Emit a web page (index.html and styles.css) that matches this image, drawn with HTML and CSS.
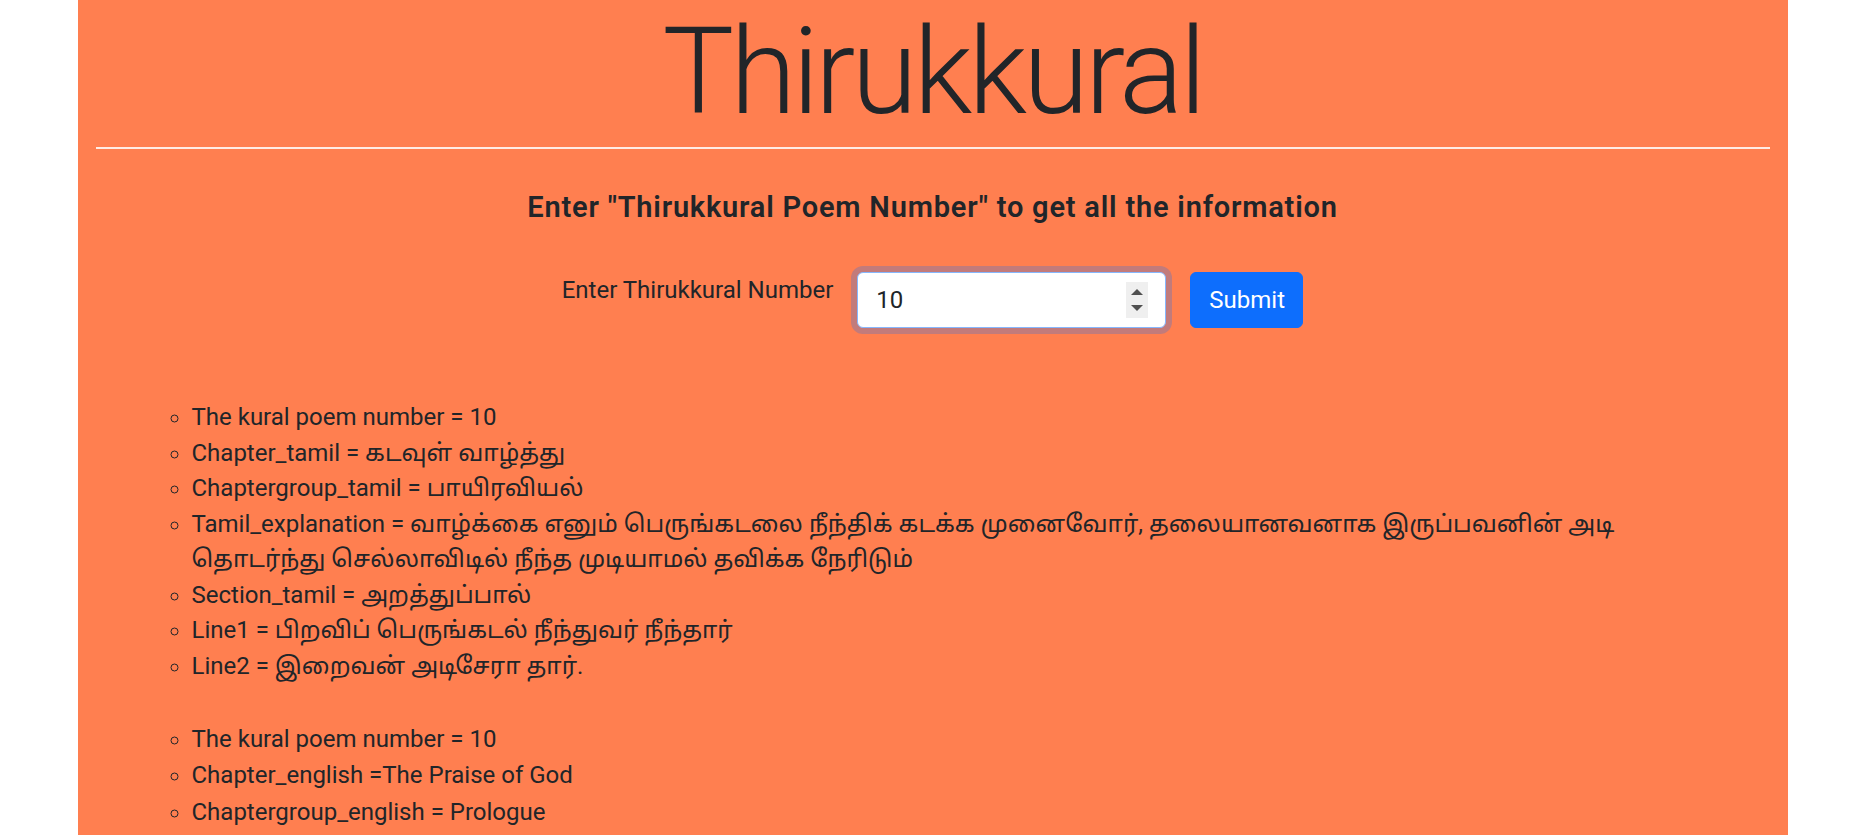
FILE: index.html
```html
<!DOCTYPE html>
<html lang="en">
<head>
<meta charset="utf-8">
<title>Thirukkural</title>
<link rel="stylesheet" href="styles.css">
</head>
<body>
<div class="container">
  <h1 class="title">Thirukkural</h1>
  <hr class="rule">
  <h2 class="prompt">Enter "Thirukkural Poem Number" to get all the information</h2>
  <form class="kural-form">
    <label class="form-label" for="num">Enter Thirukkural Number</label>
    <div class="input-wrap">
      <input id="num" class="num-input" type="text" value="10">
      <span class="spinner"><span class="arrow up"></span><span class="arrow down"></span></span>
    </div>
    <button class="btn-submit" type="button">Submit</button>
  </form>

  <ul class="outer">
    <li class="outer-item">
      <ul class="inner">
        <li>The kural poem number = 10</li>
        <li>Chapter_tamil = கடவுள் வாழ்த்து</li>
        <li>Chaptergroup_tamil = பாயிரவியல்</li>
        <li>Tamil_explanation = வாழ்க்கை எனும் பெருங்கடலை நீந்திக் கடக்க முனைவோர், தலையானவனாக இருப்பவனின் அடி<br>தொடர்ந்து செல்லாவிடில் நீந்த முடியாமல் தவிக்க நேரிடும்</li>
        <li>Section_tamil = அறத்துப்பால்</li>
        <li>Line1 = பிறவிப் பெருங்கடல் நீந்துவர் நீந்தார்</li>
        <li>Line2 = இறைவன் அடிசேரா தார்.</li>
      </ul>
    </li>
  </ul>

  <ul class="outer second">
    <li class="outer-item">
      <ul class="inner">
        <li>The kural poem number = 10</li>
        <li>Chapter_english =The Praise of God</li>
        <li>Chaptergroup_english = Prologue</li>
      </ul>
    </li>
  </ul>
</div>
</body>
</html>
```

FILE: styles.css
```css
html, body {
  margin: 0;
  padding: 0;
  background: #ffffff;
}

body {
  font-family: Roboto, "Noto Sans Tamil", "Lohit Tamil", "Noto Sans", sans-serif;
  color: #212529;
  font-size: 24px;
  line-height: 36px;
}

.container {
  width: 1710px;
  box-sizing: border-box;
  margin: 0 auto;
  padding: 0 18px 40px;
  background: #ff7f50;
  min-height: 100vh;
}

.title {
  margin: 0;
  font-size: 120px;
  line-height: 144px;
  font-weight: 300;
  letter-spacing: -4px;
  text-align: center;
}

.rule {
  margin: 3px 0 0;
  border: 0;
  border-top: 2px solid rgba(255, 255, 255, 0.85);
  height: 0;
}

.prompt {
  margin: 42px 0 0;
  font-size: 29px;
  line-height: 33px;
  font-weight: 600;
  letter-spacing: 0.8px;
  text-align: center;
}

.kural-form {
  margin: 48px 0 0;
  display: flex;
  justify-content: center;
  align-items: flex-start;
  gap: 24px;
}

.form-label {
  font-size: 24px;
  line-height: 36px;
}

.input-wrap {
  position: relative;
  width: 309px;
  height: 56px;
}

.num-input {
  box-sizing: border-box;
  width: 100%;
  height: 56px;
  margin: 0;
  padding: 9px 18px;
  font-family: inherit;
  font-size: 24px;
  line-height: 36px;
  color: #212529;
  background: #ffffff;
  border: 1.5px solid #86b7fe;
  border-radius: 6px;
  box-shadow: 0 0 0 6px rgba(13, 110, 253, 0.25);
  outline: none;
}

.spinner {
  position: absolute;
  right: 18px;
  top: 10px;
  width: 22px;
  height: 36px;
  background: #efefef;
}

.arrow {
  position: absolute;
  left: 5px;
  width: 0;
  height: 0;
  border-left: 6px solid transparent;
  border-right: 6px solid transparent;
}

.arrow.up {
  top: 7px;
  border-bottom: 6px solid #505050;
}

.arrow.down {
  top: 23px;
  border-top: 6px solid #505050;
}

.btn-submit {
  box-sizing: border-box;
  height: 56px;
  width: 113px;
  margin: 0;
  padding: 9px 18px;
  font-family: inherit;
  font-size: 24px;
  line-height: 36px;
  color: #ffffff;
  background: #0d6efd;
  border: 1.5px solid #0d6efd;
  border-radius: 6px;
}

.outer {
  margin: 72px 0 0;
  padding-left: 48px;
  list-style: none;
}

.outer.second {
  margin-top: 37px;
}

.inner {
  margin: 0;
  padding-left: 48px;
  list-style: circle;
}

.inner li {
  font-size: 24px;
  line-height: 35.5px;
}

.second .inner li {
  line-height: 36.3px;
}
```
